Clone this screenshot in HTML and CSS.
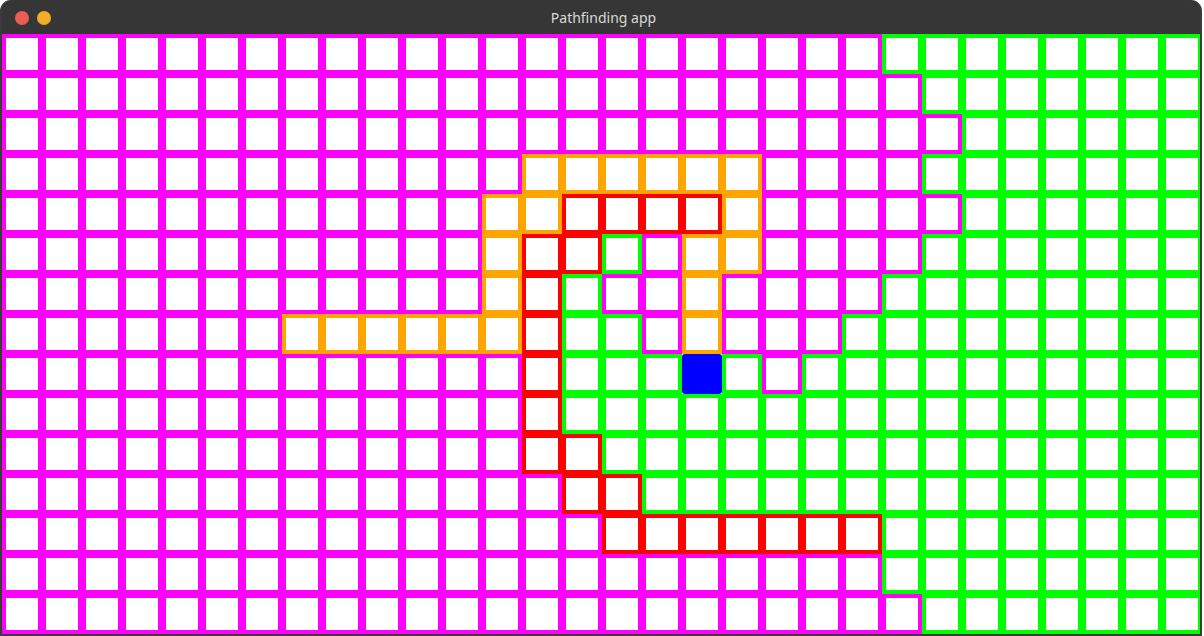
FILE: index.html
```html
<!DOCTYPE html>
<html lang="en">

<head>
    <meta charset="UTF-8">
    <title>Pathfinding app</title>
    <link rel="stylesheet" href="styles.css">
</head>

<body>
    <div class="window">
        <div class="titlebar">
            <div class="lights">
                <span class="light close"></span>
                <span class="light min"></span>
            </div>
            <div class="title">Pathfinding app</div>
            <div></div>
        </div>

        <div class="grid">
            <!-- row 0 -->
            <div class="m"></div><div class="m"></div><div class="m"></div><div class="m"></div><div class="m"></div><div class="m"></div><div class="m"></div><div class="m"></div><div class="m"></div><div class="m"></div><div class="m"></div><div class="m"></div><div class="m"></div><div class="m"></div><div class="m"></div><div class="m"></div><div class="m"></div><div class="m"></div><div class="m"></div><div class="m"></div><div class="m"></div><div class="m"></div><div class="g"></div><div class="g"></div><div class="g"></div><div class="g"></div><div class="g"></div><div class="g"></div><div class="g"></div><div class="g"></div>
            <!-- row 1 -->
            <div class="m"></div><div class="m"></div><div class="m"></div><div class="m"></div><div class="m"></div><div class="m"></div><div class="m"></div><div class="m"></div><div class="m"></div><div class="m"></div><div class="m"></div><div class="m"></div><div class="m"></div><div class="m"></div><div class="m"></div><div class="m"></div><div class="m"></div><div class="m"></div><div class="m"></div><div class="m"></div><div class="m"></div><div class="m"></div><div class="m"></div><div class="g"></div><div class="g"></div><div class="g"></div><div class="g"></div><div class="g"></div><div class="g"></div><div class="g"></div>
            <!-- row 2 -->
            <div class="m"></div><div class="m"></div><div class="m"></div><div class="m"></div><div class="m"></div><div class="m"></div><div class="m"></div><div class="m"></div><div class="m"></div><div class="m"></div><div class="m"></div><div class="m"></div><div class="m"></div><div class="m"></div><div class="m"></div><div class="m"></div><div class="m"></div><div class="m"></div><div class="m"></div><div class="m"></div><div class="m"></div><div class="m"></div><div class="m"></div><div class="m"></div><div class="g"></div><div class="g"></div><div class="g"></div><div class="g"></div><div class="g"></div><div class="g"></div>
            <!-- row 3 -->
            <div class="m"></div><div class="m"></div><div class="m"></div><div class="m"></div><div class="m"></div><div class="m"></div><div class="m"></div><div class="m"></div><div class="m"></div><div class="m"></div><div class="m"></div><div class="m"></div><div class="m"></div><div class="o"></div><div class="o"></div><div class="o"></div><div class="o"></div><div class="o"></div><div class="o"></div><div class="m"></div><div class="m"></div><div class="m"></div><div class="m"></div><div class="g"></div><div class="g"></div><div class="g"></div><div class="g"></div><div class="g"></div><div class="g"></div><div class="g"></div>
            <!-- row 4 -->
            <div class="m"></div><div class="m"></div><div class="m"></div><div class="m"></div><div class="m"></div><div class="m"></div><div class="m"></div><div class="m"></div><div class="m"></div><div class="m"></div><div class="m"></div><div class="m"></div><div class="o"></div><div class="o"></div><div class="r"></div><div class="r"></div><div class="r"></div><div class="r"></div><div class="o"></div><div class="m"></div><div class="m"></div><div class="m"></div><div class="m"></div><div class="m"></div><div class="g"></div><div class="g"></div><div class="g"></div><div class="g"></div><div class="g"></div><div class="g"></div>
            <!-- row 5 -->
            <div class="m"></div><div class="m"></div><div class="m"></div><div class="m"></div><div class="m"></div><div class="m"></div><div class="m"></div><div class="m"></div><div class="m"></div><div class="m"></div><div class="m"></div><div class="m"></div><div class="o"></div><div class="r"></div><div class="r"></div><div class="g"></div><div class="m"></div><div class="o"></div><div class="o"></div><div class="m"></div><div class="m"></div><div class="m"></div><div class="m"></div><div class="g"></div><div class="g"></div><div class="g"></div><div class="g"></div><div class="g"></div><div class="g"></div><div class="g"></div>
            <!-- row 6 -->
            <div class="m"></div><div class="m"></div><div class="m"></div><div class="m"></div><div class="m"></div><div class="m"></div><div class="m"></div><div class="m"></div><div class="m"></div><div class="m"></div><div class="m"></div><div class="m"></div><div class="o"></div><div class="r"></div><div class="g"></div><div class="m"></div><div class="m"></div><div class="o"></div><div class="m"></div><div class="m"></div><div class="m"></div><div class="m"></div><div class="g"></div><div class="g"></div><div class="g"></div><div class="g"></div><div class="g"></div><div class="g"></div><div class="g"></div><div class="g"></div>
            <!-- row 7 -->
            <div class="m"></div><div class="m"></div><div class="m"></div><div class="m"></div><div class="m"></div><div class="m"></div><div class="m"></div><div class="o"></div><div class="o"></div><div class="o"></div><div class="o"></div><div class="o"></div><div class="o"></div><div class="r"></div><div class="g"></div><div class="g"></div><div class="m"></div><div class="o"></div><div class="m"></div><div class="m"></div><div class="m"></div><div class="g"></div><div class="g"></div><div class="g"></div><div class="g"></div><div class="g"></div><div class="g"></div><div class="g"></div><div class="g"></div><div class="g"></div>
            <!-- row 8 -->
            <div class="m"></div><div class="m"></div><div class="m"></div><div class="m"></div><div class="m"></div><div class="m"></div><div class="m"></div><div class="m"></div><div class="m"></div><div class="m"></div><div class="m"></div><div class="m"></div><div class="m"></div><div class="r"></div><div class="g"></div><div class="g"></div><div class="g"></div><div class="b"></div><div class="g"></div><div class="m"></div><div class="g"></div><div class="g"></div><div class="g"></div><div class="g"></div><div class="g"></div><div class="g"></div><div class="g"></div><div class="g"></div><div class="g"></div><div class="g"></div>
            <!-- row 9 -->
            <div class="m"></div><div class="m"></div><div class="m"></div><div class="m"></div><div class="m"></div><div class="m"></div><div class="m"></div><div class="m"></div><div class="m"></div><div class="m"></div><div class="m"></div><div class="m"></div><div class="m"></div><div class="r"></div><div class="g"></div><div class="g"></div><div class="g"></div><div class="g"></div><div class="g"></div><div class="g"></div><div class="g"></div><div class="g"></div><div class="g"></div><div class="g"></div><div class="g"></div><div class="g"></div><div class="g"></div><div class="g"></div><div class="g"></div><div class="g"></div>
            <!-- row 10 -->
            <div class="m"></div><div class="m"></div><div class="m"></div><div class="m"></div><div class="m"></div><div class="m"></div><div class="m"></div><div class="m"></div><div class="m"></div><div class="m"></div><div class="m"></div><div class="m"></div><div class="m"></div><div class="r"></div><div class="r"></div><div class="g"></div><div class="g"></div><div class="g"></div><div class="g"></div><div class="g"></div><div class="g"></div><div class="g"></div><div class="g"></div><div class="g"></div><div class="g"></div><div class="g"></div><div class="g"></div><div class="g"></div><div class="g"></div><div class="g"></div>
            <!-- row 11 -->
            <div class="m"></div><div class="m"></div><div class="m"></div><div class="m"></div><div class="m"></div><div class="m"></div><div class="m"></div><div class="m"></div><div class="m"></div><div class="m"></div><div class="m"></div><div class="m"></div><div class="m"></div><div class="m"></div><div class="r"></div><div class="r"></div><div class="g"></div><div class="g"></div><div class="g"></div><div class="g"></div><div class="g"></div><div class="g"></div><div class="g"></div><div class="g"></div><div class="g"></div><div class="g"></div><div class="g"></div><div class="g"></div><div class="g"></div><div class="g"></div>
            <!-- row 12 -->
            <div class="m"></div><div class="m"></div><div class="m"></div><div class="m"></div><div class="m"></div><div class="m"></div><div class="m"></div><div class="m"></div><div class="m"></div><div class="m"></div><div class="m"></div><div class="m"></div><div class="m"></div><div class="m"></div><div class="m"></div><div class="r"></div><div class="r"></div><div class="r"></div><div class="r"></div><div class="r"></div><div class="r"></div><div class="r"></div><div class="g"></div><div class="g"></div><div class="g"></div><div class="g"></div><div class="g"></div><div class="g"></div><div class="g"></div><div class="g"></div>
            <!-- row 13 -->
            <div class="m"></div><div class="m"></div><div class="m"></div><div class="m"></div><div class="m"></div><div class="m"></div><div class="m"></div><div class="m"></div><div class="m"></div><div class="m"></div><div class="m"></div><div class="m"></div><div class="m"></div><div class="m"></div><div class="m"></div><div class="m"></div><div class="m"></div><div class="m"></div><div class="m"></div><div class="m"></div><div class="m"></div><div class="m"></div><div class="g"></div><div class="g"></div><div class="g"></div><div class="g"></div><div class="g"></div><div class="g"></div><div class="g"></div><div class="g"></div>
            <!-- row 14 -->
            <div class="m"></div><div class="m"></div><div class="m"></div><div class="m"></div><div class="m"></div><div class="m"></div><div class="m"></div><div class="m"></div><div class="m"></div><div class="m"></div><div class="m"></div><div class="m"></div><div class="m"></div><div class="m"></div><div class="m"></div><div class="m"></div><div class="m"></div><div class="m"></div><div class="m"></div><div class="m"></div><div class="m"></div><div class="m"></div><div class="m"></div><div class="g"></div><div class="g"></div><div class="g"></div><div class="g"></div><div class="g"></div><div class="g"></div><div class="g"></div>
        </div>
    </div>
</body>

</html>
```

FILE: styles.css
```css
body {
    margin: 0;
    background-color: #ffffff;
    font-family: "Noto Sans", "DejaVu Sans", sans-serif;
}

.window {
    width: 1202px;
    height: 636px;
    box-sizing: border-box;
    background-color: #363636;
    border: 2px solid #3b3b3b;
    border-top: 0;
    border-radius: 11px 11px 0 0;
    overflow: hidden;
}

.titlebar {
    height: 34px;
    display: grid;
    grid-template-columns: 1fr auto 1fr;
    align-items: center;
}

.lights {
    display: flex;
    gap: 8px;
    padding-left: 13px;
    padding-top: 2px;
}

.light {
    width: 14px;
    height: 14px;
    border-radius: 50%;
}

.close {
    background-color: #ec5b55;
}

.min {
    background-color: #f2ac25;
}

.title {
    color: #d8d8d8;
    font-size: 14px;
    padding-top: 1px;
    padding-left: 5px;
}

.grid {
    display: grid;
    grid-template-columns: repeat(30, 40px);
    grid-auto-rows: 40px;
    width: 1198px;
    height: 600px;
    overflow: hidden;
    background-color: #ffffff;
}

.grid > div {
    box-sizing: border-box;
    border: 4px solid;
    background-color: #ffffff;
}

.grid .m {
    border-color: #ff00ff;
}

.grid .g {
    border-color: #00ff00;
}

.grid .o {
    border-color: #ffa500;
}

.grid .r {
    border-color: #ff0000;
}

.grid .b {
    border-color: #0000ff;
    background-color: #0000ff;
    border-radius: 3px;
}
```
